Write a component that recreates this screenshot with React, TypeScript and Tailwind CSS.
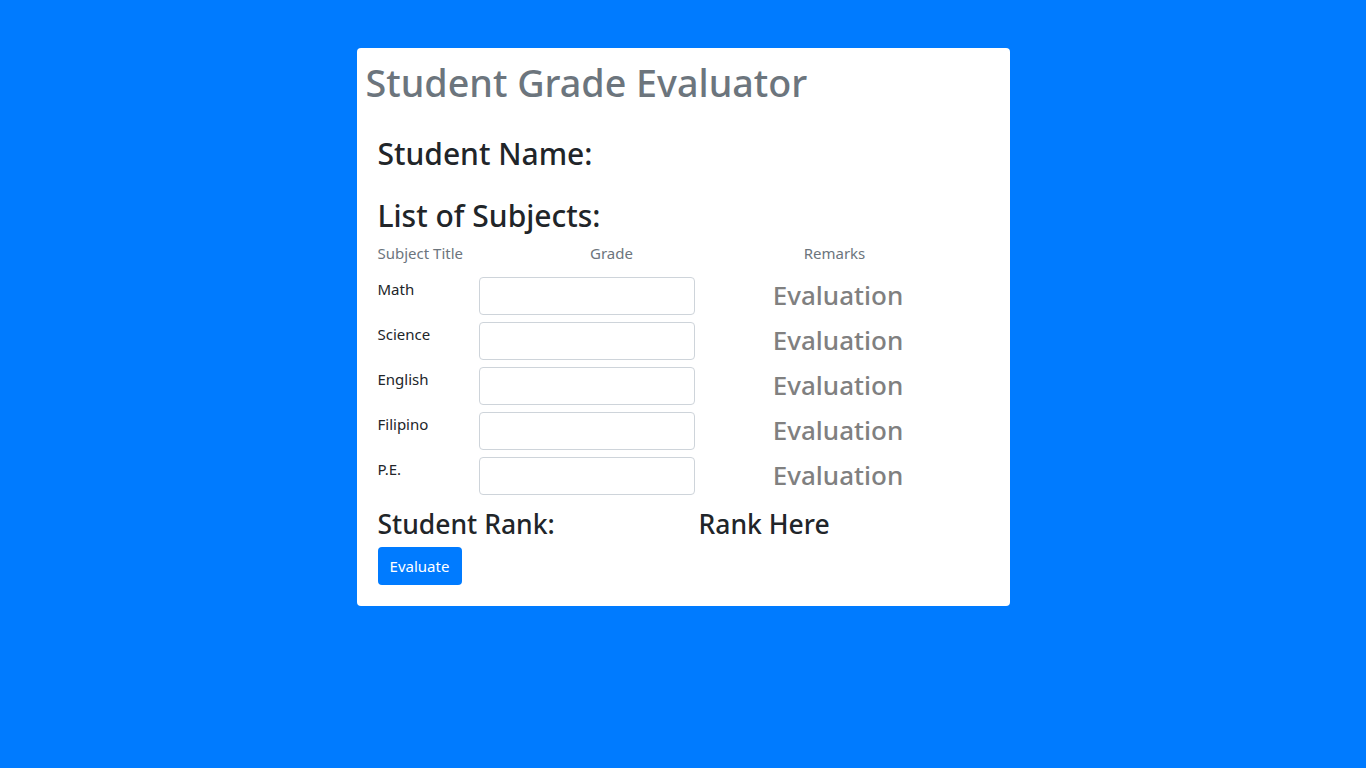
import React from "react";

const subjects = ["Math", "Science", "English", "Filipino", "P.E."];

export default function App() {
  return (
    <div
      className="min-h-screen w-full bg-[#007bff] pt-[48px]"
      style={{ fontFamily: '"Noto Sans", "Open Sans", sans-serif' }}
    >
      <div className="mx-auto w-[653px] h-[558px] rounded-[4px] bg-white">
        <h1 className="pl-[9px] pt-[11px] h-[49px] box-content text-[37.7px] leading-[48px] font-medium text-[#6c757d]">
          Student Grade Evaluator
        </h1>
        <div className="px-[21px]">
          <h3 className="mt-[26px] text-[30px] leading-[40px] font-medium text-[#212529]">
            Student Name:
          </h3>
          <h3 className="mt-[22px] text-[30px] leading-[40px] font-medium text-[#212529]">
            List of Subjects:
          </h3>
          <div className="mt-[5px] flex h-[24px] items-center text-[15px] text-[#6c757d]">
            <div className="w-[101px]">Subject Title</div>
            <div className="w-[266px] text-center">Grade</div>
            <div className="w-[180px] text-center">Remarks</div>
          </div>
          <div className="mt-[12px] flex flex-col gap-[7px]">
            {subjects.map((s) => (
              <div key={s} className="flex h-[38px] items-start">
                <div className="w-[101px] pt-[1px] text-[15px] leading-[22px] text-[#212529]">{s}</div>
                <input
                  type="text"
                  className="h-[38px] w-[216px] rounded-[4px] border border-[#ced4da] bg-white"
                />
                <div className="flex h-[38px] w-[287px] items-center justify-center pb-[2px] text-[26px] font-medium text-[#808080]">
                  Evaluation
                </div>
              </div>
            ))}
          </div>
          <div className="mt-[10px] flex h-[40px] items-center text-[26.5px] font-medium text-[#212529]">
            <div className="w-[321px]">Student Rank:</div>
            <div>Rank Here</div>
          </div>
          <button className="mt-[2px] h-[38px] w-[84px] rounded-[4px] bg-[#007bff] text-[15px] text-white">
            Evaluate
          </button>
        </div>
      </div>
    </div>
  );
}
